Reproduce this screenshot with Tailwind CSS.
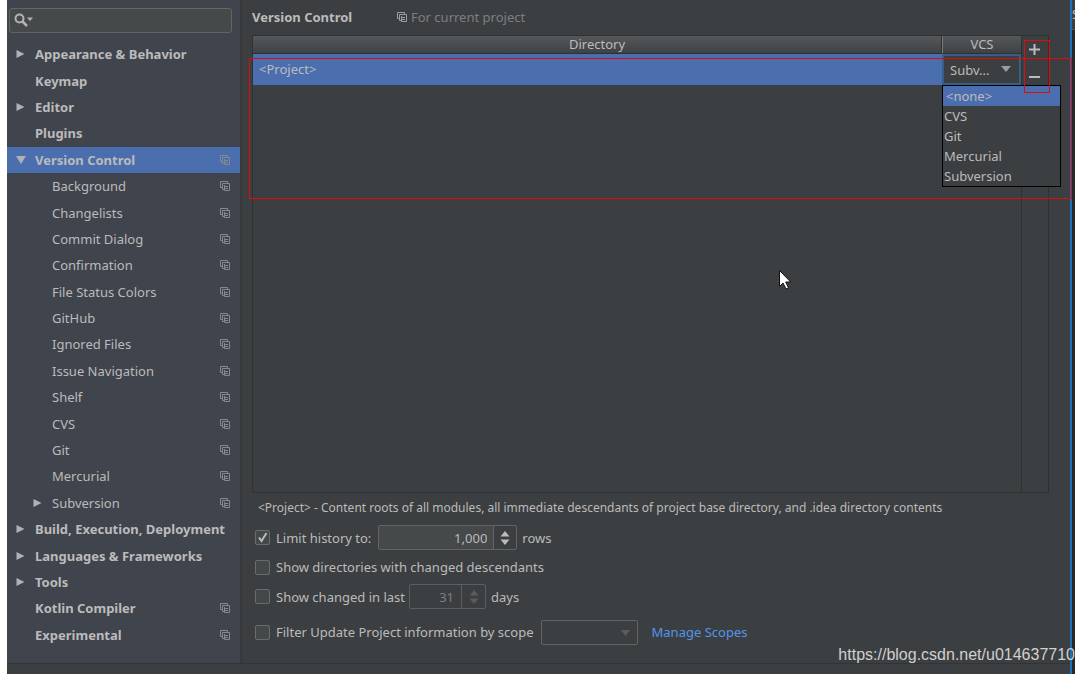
<!DOCTYPE html>
<html lang="en">
<head>
<meta charset="utf-8">
<title>Settings - Version Control</title>
<script src="https://cdn.jsdelivr.net/npm/@tailwindcss/browser@4"></script>
</head>
<body class="bg-white font-['Noto_Sans','Open_Sans',sans-serif] text-[13px] leading-5 text-[#bbbbbb]">
<svg class="hidden" aria-hidden="true">
  <symbol id="copy" viewBox="0 0 10 10">
    <path d="M2 6.500H.5V.5H7.500V2" fill="none" stroke="currentColor"/>
    <path d="M4 8.500H2.500V2.500H9.500V9.500H4.500V4" fill="none" stroke="currentColor"/>
    <path d="M5 5.500h3M5 7.500h3" stroke="currentColor"/>
  </symbol>
  <symbol id="right" viewBox="0 0 8 10"><path d="M0 1l8 4-8 4z" fill="currentColor"/></symbol>
  <symbol id="down" viewBox="0 0 10 8"><path d="M0 0h10L5 8z" fill="currentColor"/></symbol>
  <symbol id="spin" viewBox="0 0 10 14"><path d="M5 0l4.500 5.500h-9zM5 14L.5 8.500h9z" fill="currentColor"/></symbol>
</svg>
<div class="relative ml-[7px] mr-[10px] flex min-h-screen flex-col bg-[#3c3f41]">
  <div class="flex flex-1">
    <nav class="flex w-[233px] shrink-0 flex-col bg-[#40444d] pt-2 pb-[15px]" aria-label="Settings">
      <div class="relative mr-2 ml-0.5 mb-2">
        <input type="search" aria-label="Search settings" class="block h-[25px] w-full rounded-[3px] border border-[#646464] bg-[#45494a] pl-7 outline-none">
        <svg class="pointer-events-none absolute top-[5px] left-[5px] h-[14px] w-5" viewBox="0 0 20 14"><circle cx="5.500" cy="5.500" r="4" fill="none" stroke="#b4b4b4" stroke-width="2"/><path d="M8.500 8.500l4.500 4.500" stroke="#b4b4b4" stroke-width="2.500"/><path d="M13 4.500h6L16 8z" fill="#b4b4b4"/></svg>
      </div>
      <ul id="tree" class="flex flex-1 flex-col"></ul>
    </nav>
    <div class="w-[2px] shrink-0 bg-[#37393b]"></div>
    <main class="flex min-w-0 flex-1 flex-col pr-[21px] pl-[10px]">
      <header class="flex h-[35px] items-center pb-0.5">
        <h1 class="w-[145px] font-bold">Version Control</h1>
        <svg class="mr-1 h-[10px] w-[10px] text-[#9a9da0]"><use href="#copy"/></svg>
        <span class="text-[#7c7e80]">For current project</span>
      </header>
      <div class="flex flex-1 border border-[#2f3133]">
        <div class="relative min-w-0 flex-1">
          <table class="w-full table-fixed border-separate border-spacing-0">
            <thead>
              <tr class="h-[18px] bg-linear-to-b from-[#55585a] to-[#3e4143] leading-[17px]">
                <th class="border-r border-b border-[#2f3133] p-0 font-normal">Directory</th>
                <th class="w-[79px] border-b border-l border-b-[#2f3133] border-l-[#77797b] p-0 font-normal">VCS</th>
              </tr>
            </thead>
            <tbody>
              <tr class="h-[31px] bg-[#4b6eaf]">
                <td class="px-1.5 pt-0 pb-px">&lt;Project&gt;</td>
                <td class="border-2 border-[#355f87] bg-[#3c3f41] p-0">
                  <div class="relative">
                    <select aria-label="VCS for project" class="block h-[27px] w-full appearance-none bg-transparent pl-[6px] outline-none"><option>Subv...</option></select>
                    <svg class="pointer-events-none absolute top-[10px] right-[8px] h-[6px] w-[10px] text-[#9a9c9e]" viewBox="0 0 10 6"><path d="M0 0h10L5 6z" fill="currentColor"/></svg>
                  </div>
                </td>
              </tr>
            </tbody>
          </table>
          <ul role="listbox" aria-label="VCS" class="absolute top-[49px] -right-[40px] z-10 w-[119px] border border-black bg-[#3c3f41] leading-5">
            <li role="option" aria-selected="true" class="bg-[#4b6eaf] pl-[3px]">&lt;none&gt;</li>
            <li role="option" class="pl-px">CVS</li>
            <li role="option" class="pl-px">Git</li>
            <li role="option" class="pl-px">Mercurial</li>
            <li role="option" class="pl-px">Subversion</li>
          </ul>
        </div>
        <div class="flex w-[27px] flex-col items-center border-l border-[#2f3133] pr-0.5">
          <button type="button" aria-label="Add" class="flex h-[26px] w-full items-center justify-center"><svg class="h-[11px] w-[11px]" viewBox="0 0 11 11"><path d="M5.500 0v11M0 5.500h11" stroke="#bbb" stroke-width="2"/></svg></button>
          <button type="button" aria-label="Remove" class="flex h-[27px] w-full items-center justify-center"><svg class="h-[11px] w-[11px]" viewBox="0 0 11 11"><path d="M0 7h11" stroke="#bbb" stroke-width="2"/></svg></button>
        </div>
      </div>
      <p class="pt-[5px] pb-[5px] pl-1.5 text-xs leading-5">&lt;Project&gt; - Content roots of all modules, all immediate descendants of project base directory, and .idea directory contents</p>
      <form class="flex flex-col pb-4 pl-[3px]">
        <div class="flex h-[29px] items-center">
          <label class="flex items-center gap-1.5"><span class="relative flex"><input type="checkbox" checked class="peer h-[15px] w-[15px] appearance-none rounded-[2px] border border-[#6b6b6b] bg-[#43494a]"><svg class="pointer-events-none absolute top-0 left-0 hidden h-[15px] w-[15px] peer-checked:block" viewBox="0 0 15 15"><path d="M4 7.500l2.500 3.500L11.500 3" fill="none" stroke="#bbb" stroke-width="2"/></svg></span>Limit history to:</label>
          <div class="mr-[5px] ml-[7px] flex h-[25px] w-[139px] rounded-[2px] border border-[#646464]">
            <input type="text" value="1,000" aria-label="History rows" class="min-w-0 flex-1 border-r border-[#646464] bg-[#45494a] pr-1.5 text-right outline-none">
            <button type="button" aria-label="Change rows" class="flex w-[22px] items-center justify-center"><svg class="h-[14px] w-[10px]"><use href="#spin"/></svg></button>
          </div>
          <span>rows</span>
        </div>
        <label class="flex h-[30px] items-center gap-1.5"><input type="checkbox" class="h-[15px] w-[15px] appearance-none rounded-[2px] border border-[#6b6b6b] bg-[#43494a]">Show directories with changed descendants</label>
        <div class="flex h-[29px] items-center">
          <label class="flex items-center gap-1.5"><input type="checkbox" class="h-[15px] w-[15px] appearance-none rounded-[2px] border border-[#6b6b6b] bg-[#43494a]">Show changed in last</label>
          <div class="mr-[5px] ml-1 flex h-[25px] w-[77px] rounded-[2px] border border-[#5c5e60] text-[#7c7e80]">
            <input type="text" value="31" disabled aria-label="Days" class="min-w-0 flex-1 border-r border-[#5c5e60] pr-[7px] text-right">
            <button type="button" disabled aria-label="Change days" class="flex w-[23px] items-center justify-center text-[#595b5d]"><svg class="h-[14px] w-[10px]"><use href="#spin"/></svg></button>
          </div>
          <span>days</span>
        </div>
        <div class="mt-1.5 flex h-[30px] items-center">
          <label class="flex items-center gap-1.5"><input type="checkbox" class="h-[15px] w-[15px] appearance-none rounded-[2px] border border-[#6b6b6b] bg-[#43494a]">Filter Update Project information by scope</label>
          <div class="relative mr-[14px] ml-[7px]">
            <select disabled aria-label="Scope" class="block h-[25px] w-[97px] appearance-none rounded-[2px] border border-[#646464] bg-transparent"><option></option></select>
            <svg class="pointer-events-none absolute top-[10px] right-[8px] h-[6px] w-[9px] text-[#5b5d5f]" viewBox="0 0 9 6"><path d="M0 0h9L4.500 6z" fill="currentColor"/></svg>
          </div>
          <a href="#" class="text-[#5394ec]">Manage Scopes</a>
        </div>
      </form>
    </main>
    <div class="w-[2px] shrink-0 bg-[#1a6fb8]"></div>
    <aside class="w-[3px] shrink-0 overflow-hidden bg-[#26282a]"><div class="h-[30px] border-b border-[#555] bg-[#3c3f41] pt-1">S</div></aside>
  </div>
  <footer class="flex h-[11px]"><div class="flex-1 border-t border-[#323436]"></div><div class="w-[2px] bg-[#1a6fb8]"></div><div class="w-[3px] bg-[#26282a]"></div></footer>
  <div class="pointer-events-none absolute top-[58px] right-[3px] left-[242px] z-20 h-[141px] border border-[#e00b0b]"></div>
  <div class="pointer-events-none absolute top-10 right-[25px] z-20 h-[53px] w-[26px] border border-[#e00b0b]"></div>
  <svg class="pointer-events-none absolute top-[270px] left-[772px] h-5 w-[13px]" viewBox="0 0 13 20"><path d="M.5.500v16l3.500-3.500 3 6 2.500-1.200-2.800-5.800h5z" fill="#fff" stroke="#111"/></svg>
  <div class="absolute right-0 bottom-[7px] z-20 font-['Liberation_Sans',sans-serif] text-base text-[#d0d0d0]">https://blog.csdn.net/u014637710</div>
</div>
<script>
// label, kind (t: top level, s: second level), arrow, per-project mark
const items = [
  ['Appearance & Behavior','t','right',0],['Keymap','t','',0],['Editor','t','right',0],['Plugins','t','',0],
  ['Version Control','t','down',1],['Background','s','',1],['Changelists','s','',1],['Commit Dialog','s','',1],
  ['Confirmation','s','',1],['File Status Colors','s','',1],['GitHub','s','',1],['Ignored Files','s','',1],
  ['Issue Navigation','s','',1],['Shelf','s','',1],['CVS','s','',1],['Git','s','',1],['Mercurial','s','',1],
  ['Subversion','s','right',1],['Build, Execution, Deployment','t','right',0],['Languages & Frameworks','t','right',0],
  ['Tools','t','right',0],['Kotlin Compiler','t','',1],['Experimental','t','',1]];
document.getElementById('tree').innerHTML = items.map(([name, kind, arrow, mark]) => `
  <li class="flex flex-1 items-center pr-[10px] ${kind === 't' ? 'pl-[9px] font-bold' : 'pl-[26px]'} ${arrow === 'down' ? 'bg-[#4b6eaf]' : ''}">
    <span class="flex w-[19px] shrink-0 text-[#afb1b3]">${arrow ? `<svg class="${arrow === 'down' ? 'h-2 w-[10px]' : 'h-[10px] w-[9px]'}"><use href="#${arrow}"/></svg>` : ''}</span>
    <a href="#" class="flex-1 whitespace-nowrap">${name.replace('&', '&amp;')}</a>
    ${mark ? '<svg class="h-[10px] w-[10px] shrink-0 text-[#83898f]"><use href="#copy"/></svg>' : ''}
  </li>`).join('');
</script>
</body>
</html>
